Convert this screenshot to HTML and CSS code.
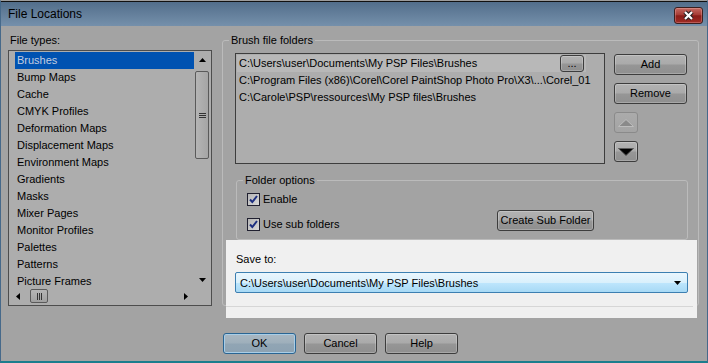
FILE: index.html
```html
<!DOCTYPE html>
<html lang="en">
<head>
  <meta charset="UTF-8" />
  <title>File Locations</title>
  <link rel="stylesheet" href="styles.css">
</head>
<body>

<div class="window">
  <div class="titlebar">
    <span class="title">File Locations</span>
    <span class="close-btn">
      <svg width="13" height="11" viewBox="0 0 13 11"><path d="M3 2 L10 9 M10 2 L3 9" stroke="#2a2222" stroke-width="4.4"/><path d="M3 2 L10 9 M10 2 L3 9" stroke="#fff" stroke-width="2.2"/></svg>
    </span>
  </div>

  <div class="main">
    <div class="content">

      <div class="types">
        <div class="label">File types:</div>
        <div class="types-list">
          <ul class="items">
            <li class="selected">Brushes</li>
            <li>Bump Maps</li>
            <li>Cache</li>
            <li>CMYK Profiles</li>
            <li>Deformation Maps</li>
            <li>Displacement Maps</li>
            <li>Environment Maps</li>
            <li>Gradients</li>
            <li>Masks</li>
            <li>Mixer Pages</li>
            <li>Monitor Profiles</li>
            <li>Palettes</li>
            <li>Patterns</li>
            <li>Picture Frames</li>
          </ul>
          <div class="vscroll">
            <span class="arrow"><svg width="7" height="4" viewBox="0 0 7 4"><path d="M3.5 0 L7 4 H0Z" fill="#000"/></svg></span>
            <span class="vthumb"><svg width="7" height="5" viewBox="0 0 7 5"><path d="M0 0.5H7M0 2.5H7M0 4.5H7" stroke="#333"/></svg></span>
            <span class="spacer"></span>
            <span class="arrow"><svg width="7" height="4" viewBox="0 0 7 4"><path d="M0 0 H7 L3.5 4Z" fill="#000"/></svg></span>
          </div>
          <div class="hscroll">
            <span class="arrow"><svg width="4" height="7" viewBox="0 0 4 7"><path d="M0 3.5 L4 0 V7Z" fill="#000"/></svg></span>
            <span class="hthumb"><svg width="5" height="7" viewBox="0 0 5 7"><path d="M0.5 0V7M2.5 0V7M4.5 0V7" stroke="#333"/></svg></span>
            <span class="spacer"></span>
            <span class="arrow"><svg width="4" height="7" viewBox="0 0 4 7"><path d="M4 3.5 L0 0 V7Z" fill="#000"/></svg></span>
          </div>
          <div class="corner"></div>
        </div>
      </div>

      <fieldset class="group">
        <legend>Brush file folders</legend>
        <div class="group-body">
          <div class="folder-row">
            <div class="folder-list">
              <div class="folder-item editing">
                <span>C:\Users\user\Documents\My PSP Files\Brushes</span>
                <button class="btn btn-browse">...</button>
              </div>
              <div class="folder-item">C:\Program Files (x86)\Corel\Corel PaintShop Photo Pro\X3\...\Corel_01</div>
              <div class="folder-item">C:\Carole\PSP\ressources\My PSP files\Brushes</div>
            </div>
            <div class="side">
              <button class="btn">Add</button>
              <button class="btn">Remove</button>
              <button class="btn btn-arrow" disabled>
                <svg width="16" height="8" viewBox="0 0 16 8"><path d="M8 0.5 L15.5 7.5 H0.5Z" fill="#8a8a8a" stroke="#bdbdbd"/></svg>
              </button>
              <button class="btn btn-arrow">
                <svg width="16" height="8" viewBox="0 0 16 8"><path d="M0.5 0.5 H15.5 L8 7.5Z" fill="#000" stroke="#5a5a5a"/></svg>
              </button>
            </div>
          </div>

          <fieldset class="options">
            <legend>Folder options</legend>
            <div class="options-body">
              <div class="checks">
                <label class="check"><span class="box"><svg width="11" height="11" viewBox="0 0 11 11"><path d="M2 5.5 L4.3 8 L9 2" fill="none" stroke="#1d2f80" stroke-width="2"/></svg></span>Enable</label>
                <label class="check"><span class="box"><svg width="11" height="11" viewBox="0 0 11 11"><path d="M2 5.5 L4.3 8 L9 2" fill="none" stroke="#1d2f80" stroke-width="2"/></svg></span>Use sub folders</label>
              </div>
              <button class="btn btn-sub">Create Sub Folder</button>
            </div>
          </fieldset>

          <div class="save-to">
            <div class="label">Save to:</div>
            <div class="combo">
              <span>C:\Users\user\Documents\My PSP Files\Brushes</span>
              <svg width="7" height="4" viewBox="0 0 7 4"><path d="M0 0 H7 L3.5 4Z" fill="#000"/></svg>
            </div>
            <div class="save-rule"></div>
          </div>
        </div>
      </fieldset>

    </div>

    <div class="footer">
      <button class="btn btn-default">OK</button>
      <button class="btn">Cancel</button>
      <button class="btn">Help</button>
    </div>
  </div>
</div>

</body>
</html>
```

FILE: styles.css
```css
body {
  margin: 0;
  font-family: "Liberation Sans", Arial, sans-serif;
  font-size: 11px;
  color: #000;
  background: #a3a3a3;
}

.window {
  width: 708px;
  height: 363px;
  box-sizing: border-box;
  border-top: 1px solid #9c9c9c;
  border-left: 1px solid #46698a;
  border-right: 1px solid #46698a;
  border-bottom: 2px solid #1b7d8d;
  display: flex;
  flex-direction: column;
  background: #a3a3a3;
}

/* title bar */
.titlebar {
  height: 25px;
  box-sizing: border-box;
  border-top: 1px solid #111;
  background: linear-gradient(#526e8b, #7590ab);
  display: flex;
  align-items: flex-start;
  justify-content: space-between;
  padding: 0 4px 0 7px;
}
.title {
  font-size: 12px;
  line-height: 24px;
}
.close-btn {
  margin-top: 5px;
  width: 29px;
  height: 17px;
  box-sizing: border-box;
  border: 1px solid #3b1f1f;
  border-radius: 3px;
  background: linear-gradient(#c46a62, #a63c35 45%, #8a1d18 52%, #a02c25);
  box-shadow: inset 0 0 0 1px rgba(255, 200, 200, 0.3);
  display: flex;
  align-items: center;
  justify-content: center;
}

.main {
  flex: 1;
  display: flex;
  flex-direction: column;
  padding: 7px 8px 0 7px;
}
.content {
  display: flex;
  gap: 10px;
  height: 273px;
}

.label {
  line-height: 14px;
  padding-left: 2px;
}

/* file types list */
.types {
  width: 204px;
  display: flex;
  flex-direction: column;
}
.types .label {
  margin-bottom: 3px;
}
.types-list {
  height: 256px;
  box-sizing: border-box;
  border: 1px solid #4d4d4d;
  padding: 1px;
  background: #adadad;
  display: grid;
  grid-template-columns: 1fr 16px;
  grid-template-rows: 1fr 16px;
}
.items {
  list-style: none;
  margin: 0;
  padding: 0 0 0 5px;
  overflow: hidden;
}
.items li {
  height: 17px;
  line-height: 17px;
  padding-left: 2px;
  white-space: nowrap;
}
.items li.selected {
  background: #0052b1;
  color: #c3cde0;
}

.vscroll {
  display: flex;
  flex-direction: column;
  align-items: center;
}
.hscroll {
  display: flex;
  align-items: center;
}
.arrow {
  width: 16px;
  height: 16px;
  display: flex;
  align-items: center;
  justify-content: center;
}
.spacer {
  flex: 1;
}
.vthumb,
.hthumb {
  box-sizing: border-box;
  border: 1px solid #5a5a5a;
  border-radius: 2px;
  display: flex;
  align-items: center;
  justify-content: center;
}
.vthumb {
  width: 14px;
  height: 88px;
  margin-top: 3px;
  background: linear-gradient(90deg, #b5b5b5, #a5a5a5);
}
.hthumb {
  width: 18px;
  height: 14px;
  margin-left: 4px;
  background: linear-gradient(#b5b5b5, #a0a0a0);
}

/* group boxes */
.group,
.options {
  margin: 0;
  padding: 0;
  min-width: 0;
  border: 1px solid #bbbbbb;
  border-radius: 3px;
}
.group {
  flex: 1;
}
.group > legend,
.options > legend {
  margin-left: 6px;
  padding: 0 2px;
  line-height: 14px;
}
.group-body {
  padding: 6px 11px 0 12px;
}

.folder-row {
  display: flex;
  gap: 9px;
}
.folder-list {
  width: 370px;
  height: 111px;
  box-sizing: border-box;
  border: 1px solid #3d3d3d;
  padding: 1px;
  background: #adadad;
}
.folder-item {
  height: 17px;
  line-height: 17px;
  padding-left: 2px;
  white-space: nowrap;
  display: flex;
  align-items: center;
}
.folder-item.editing {
  width: 349px;
  box-sizing: border-box;
  background: #b8b8b8;
}

.side {
  width: 73px;
  display: flex;
  flex-direction: column;
  gap: 8px;
  padding-top: 1px;
}

/* buttons */
.btn {
  height: 21px;
  box-sizing: border-box;
  border: 1px solid #3d3d3d;
  border-radius: 3px;
  background: linear-gradient(#b2b2b2, #aaaaaa 48%, #969696 52%, #8f8f8f);
  box-shadow: inset 0 0 0 1px rgba(255, 255, 255, 0.22);
  font: inherit;
  color: #000;
  padding: 0;
  line-height: 19px;
  text-align: center;
}
.btn-browse {
  margin-left: auto;
  margin-right: 2px;
  width: 24px;
  height: 17px;
  line-height: 13px;
}
.btn-arrow {
  width: 24px;
  display: flex;
  align-items: center;
  justify-content: center;
}
.btn-arrow:disabled {
  border-color: #8a8a8a;
  background: linear-gradient(#ababab, #a4a4a4);
  box-shadow: none;
}
.btn-sub {
  width: 97px;
}
.btn-default {
  border-color: #2a6593;
  background: linear-gradient(#a9b7c2, #9eafbb 48%, #91a5b4 52%, #8da2b2);
  box-shadow: inset 0 0 0 1px #a9cde6;
}

/* folder options */
.options {
  margin: 9px -1px 0 1px;
}
.options-body {
  padding: 6px 10px 8px 10px;
  display: grid;
  grid-template-columns: 250px auto;
  align-items: end;
}
.checks {
  display: flex;
  flex-direction: column;
  gap: 12px;
}
.check {
  display: flex;
  align-items: center;
  gap: 3px;
  height: 13px;
  line-height: 13px;
}
.box {
  width: 13px;
  height: 13px;
  box-sizing: border-box;
  border: 1px solid #202030;
  background: linear-gradient(135deg, #b5b5b5, #d8d8d8);
  display: flex;
}

/* save to (highlighted) */
.save-to {
  margin: 0 -10px -13px -9px;
  padding: 12px 9px 0;
  background: #f0f0f0;
}
.save-to .label {
  padding-left: 1px;
  margin-bottom: 6px;
}
.combo {
  height: 21px;
  box-sizing: border-box;
  border: 1px solid #3c7fb1;
  border-radius: 2px;
  background: linear-gradient(#eaf6fd, #d9f0fc 50%, #bee6fd 51%, #a7d9f5);
  display: flex;
  align-items: center;
  padding: 0 6px 0 4px;
}
.combo span {
  flex: 1;
}
.save-rule {
  margin: 13px -5px 0 -9px;
  border-top: 1px solid #d6d6d6;
  height: 11px;
}

.footer {
  display: flex;
  gap: 8px;
  padding: 27px 0 0 215px;
}
.footer .btn {
  width: 73px;
}
```
